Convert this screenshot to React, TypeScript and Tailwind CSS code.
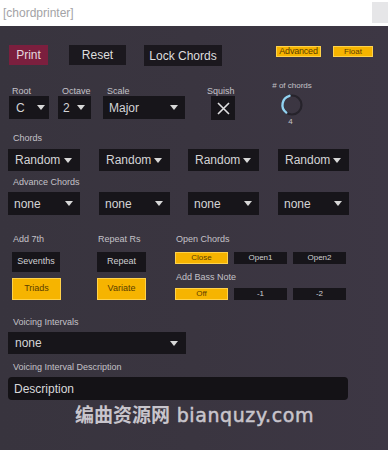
import React from 'react';

const font = { fontFamily: '"Liberation Sans", Arial, sans-serif' };

const Caret = () => (
    <svg width="8" height="5" viewBox="0 0 8 5" className="shrink-0">
        <path d="M0 0h8L4 5z" fill="#d8d8d8" />
    </svg>
);

type DropProps = {
    text: string;
    w: string;
    h?: string;
    pad?: string;
};

const Drop = ({ text, w, h = 'h-[22px]', pad = 'pl-[7px] pr-[8px]' }: DropProps) => (
    <div className={`${w} ${h} ${pad} bg-[#17151a] flex items-center justify-between text-[12px] text-[#d4d4d6]`}>
        <span>{text}</span>
        <Caret />
    </div>
);

const Label = ({ children, className = '' }: { children: React.ReactNode; className?: string }) => (
    <div className={`h-[10px] text-[9px] leading-[10px] text-[#c4c2c8] ${className}`}>{children}</div>
);

type ToggleProps = { text: string; on?: boolean; w: string; h: string; size?: string };

const Toggle = ({ text, on, w, h, size = 'text-[8px]' }: ToggleProps) => (
    <div
        className={`${w} ${h} ${size} flex items-center justify-center ${
            on ? 'bg-[#f6b400] text-[#5b3d00] border border-[#ffd24a]' : 'bg-[#17151a] text-[#d0d0d2]'
        }`}
    >
        {text}
    </div>
);

const Knob = () => (
    <svg width="26" height="24" viewBox="0 0 26 24">
        <circle cx="13" cy="12" r="9.5" fill="none" stroke="#26232b" strokeWidth="2.2" />
        <path d="M7.3 19.6 A9.5 9.5 0 0 1 10.5 2.8" fill="none" stroke="#92d3f2" strokeWidth="2.4" strokeLinecap="round" />
    </svg>
);

const App = () => {
    const chords = ['Random', 'Random', 'Random', 'Random'];
    const gaps = ['ml-[8px]', 'ml-[19px]', 'ml-[18px]', 'ml-[19px]'];

    return (
        <div style={font} className="w-[388px] h-[450px] overflow-hidden bg-[#3a3540] flex flex-col">
            <div className="h-[26px] bg-white flex items-center justify-between shrink-0">
                <span className="ml-[3px] text-[12px] text-[#a3a3a6]">[chordprinter]</span>
                <div className="w-[16px] h-[21px] bg-[#e6e6e8] mb-[2px]" />
            </div>

            <div className="flex-1 bg-gradient-to-r from-[#38343e] via-[#3a3540] to-[#3d3744] flex flex-col">
                <div className="mt-[19px] h-[21px] flex items-start">
                    <div className="ml-[9px] w-[39px] h-[20px] bg-[#7b1f3e] flex items-center justify-center text-[12px] text-[#e6d8de]">
                        Print
                    </div>
                    <div className="ml-[21px] w-[57px] h-[20px] bg-[#1b181e] flex items-center justify-center text-[12px] text-[#dedede]">
                        Reset
                    </div>
                    <div className="ml-[18px] w-[78px] h-[21px] bg-[#1b181e] flex items-center justify-center text-[12px] text-[#dedede]">
                        Lock Chords
                    </div>
                    <div className="ml-[54px] mt-[1px] w-[45px] h-[11px] bg-[#f6b400] border border-[#ffd24a] flex items-center justify-center text-[9px] tracking-[-0.2px] text-[#5b3d00]">
                        Advanced
                    </div>
                    <div className="ml-[12px] mt-[1px] w-[40px] h-[11px] bg-[#f6b400] border border-[#ffd24a] flex items-center justify-center text-[8px] text-[#5b3d00]">
                        Float
                    </div>
                </div>

                <div className="mt-[15px] h-[44px] flex items-start">
                    <div className="ml-[9px] mt-[5px] flex flex-col">
                        <Label className="ml-[3px]">Root</Label>
                        <Drop text="C" w="w-[40px]" h="h-[23px]" pad="pl-[7px] pr-[4px]" />
                    </div>
                    <div className="ml-[9px] mt-[5px] flex flex-col">
                        <Label className="ml-[4px]">Octave</Label>
                        <Drop text="2" w="w-[33px]" h="h-[23px]" pad="pl-[5px] pr-[6px]" />
                    </div>
                    <div className="ml-[12px] mt-[5px] flex flex-col">
                        <Label className="ml-[4px]">Scale</Label>
                        <Drop text="Major" w="w-[82px]" h="h-[23px]" pad="pl-[6px] pr-[7px]" />
                    </div>
                    <div className="ml-[22px] mt-[5px] flex flex-col">
                        <Label>Squish</Label>
                        <div className="ml-[4px] w-[24px] h-[24px] bg-[#17151a] flex items-center justify-center">
                            <svg width="13" height="13" viewBox="0 0 13 13">
                                <path d="M1 1l11 11M12 1L1 12" stroke="#e0e0e2" strokeWidth="1.6" />
                            </svg>
                        </div>
                    </div>
                    <div className="ml-[33px] flex flex-col items-center w-[48px]">
                        <div className="h-[10px] text-[8px] leading-[10px] text-[#c4c2c8]">
                            # of chords
                        </div>
                        <div className="mt-[2px] -ml-[1px]">
                            <Knob />
                        </div>
                        <div className="text-[8px] leading-[9px] text-[#c4c2c8] -ml-[3px]">4</div>
                    </div>
                </div>

                <Label className="mt-[8px] ml-[13px]">Chords</Label>
                <div className="mt-[6px] flex">
                    {chords.map((c, i) => (
                        <div key={i} className={gaps[i]}>
                            <Drop text={c} w={i === 0 ? 'w-[72px]' : 'w-[71px]'} pad="pl-[7px] pr-[8px]" />
                        </div>
                    ))}
                </div>

                <Label className="mt-[6px] ml-[13px]">Advance Chords</Label>
                <div className="mt-[5px] flex">
                    {chords.map((_, i) => (
                        <div key={i} className={gaps[i]}>
                            <Drop text="none" w={i === 0 ? 'w-[72px]' : 'w-[71px]'} h="h-[23px]" pad="pl-[6px] pr-[7px]" />
                        </div>
                    ))}
                </div>

                <div className="mt-[19px] flex items-start">
                    <div className="ml-[12px] w-[49px] flex flex-col">
                        <Label className="ml-[1px]">Add 7th</Label>
                        <div className="mt-[8px]">
                            <Toggle text="Sevenths" w="w-[48px]" h="h-[20px]" size="text-[9px]" />
                        </div>
                        <div className="mt-[6px]">
                            <Toggle text="Triads" on w="w-[49px]" h="h-[22px]" size="text-[9px]" />
                        </div>
                    </div>
                    <div className="ml-[36px] w-[49px] flex flex-col">
                        <Label className="ml-[1px]">Repeat Rs</Label>
                        <div className="mt-[8px]">
                            <Toggle text="Repeat" w="w-[49px]" h="h-[20px]" size="text-[9px]" />
                        </div>
                        <div className="mt-[6px]">
                            <Toggle text="Variate" on w="w-[49px]" h="h-[22px]" size="text-[9px]" />
                        </div>
                    </div>
                    <div className="ml-[29px] flex flex-col">
                        <Label className="ml-[1px]">Open Chords</Label>
                        <div className="mt-[8px] flex gap-[6px]">
                            <Toggle text="Close" on w="w-[53px]" h="h-[12px]" />
                            <Toggle text="Open1" w="w-[53px]" h="h-[12px]" />
                            <Toggle text="Open2" w="w-[53px]" h="h-[12px]" />
                        </div>
                        <Label className="mt-[8px] ml-[1px]">Add Bass Note</Label>
                        <div className="mt-[6px] flex gap-[6px]">
                            <Toggle text="Off" on w="w-[53px]" h="h-[12px]" />
                            <Toggle text="-1" w="w-[53px]" h="h-[12px]" />
                            <Toggle text="-2" w="w-[53px]" h="h-[12px]" />
                        </div>
                    </div>
                </div>

                <Label className="mt-[17px] ml-[13px]">Voicing Intervals</Label>
                <div className="mt-[5px] ml-[8px]">
                    <Drop text="none" w="w-[178px]" pad="pl-[7px] pr-[8px]" />
                </div>

                <Label className="mt-[8px] ml-[13px]">Voicing Interval Description</Label>
                <div className="mt-[5px] ml-[8px] w-[340px] h-[23px] rounded-[4px] bg-[#141216] flex items-center pl-[6px] text-[12px] text-[#d8d8da]">
                    Description
                </div>

                <div
                    className="mt-[4px] ml-[75px] h-[22px] text-[19px] leading-[22px] font-bold text-[#c8c5cc] whitespace-nowrap"
                    style={{ fontFamily: '"DejaVu Sans", "Noto Sans CJK SC", sans-serif' }}
                >
                    编曲资源网{' '}
                    <span className="font-normal tracking-[0.6px] [-webkit-text-stroke:0.5px_#c8c5cc]">bianquzy.com</span>
                </div>
            </div>
        </div>
    );
};

export default App;
